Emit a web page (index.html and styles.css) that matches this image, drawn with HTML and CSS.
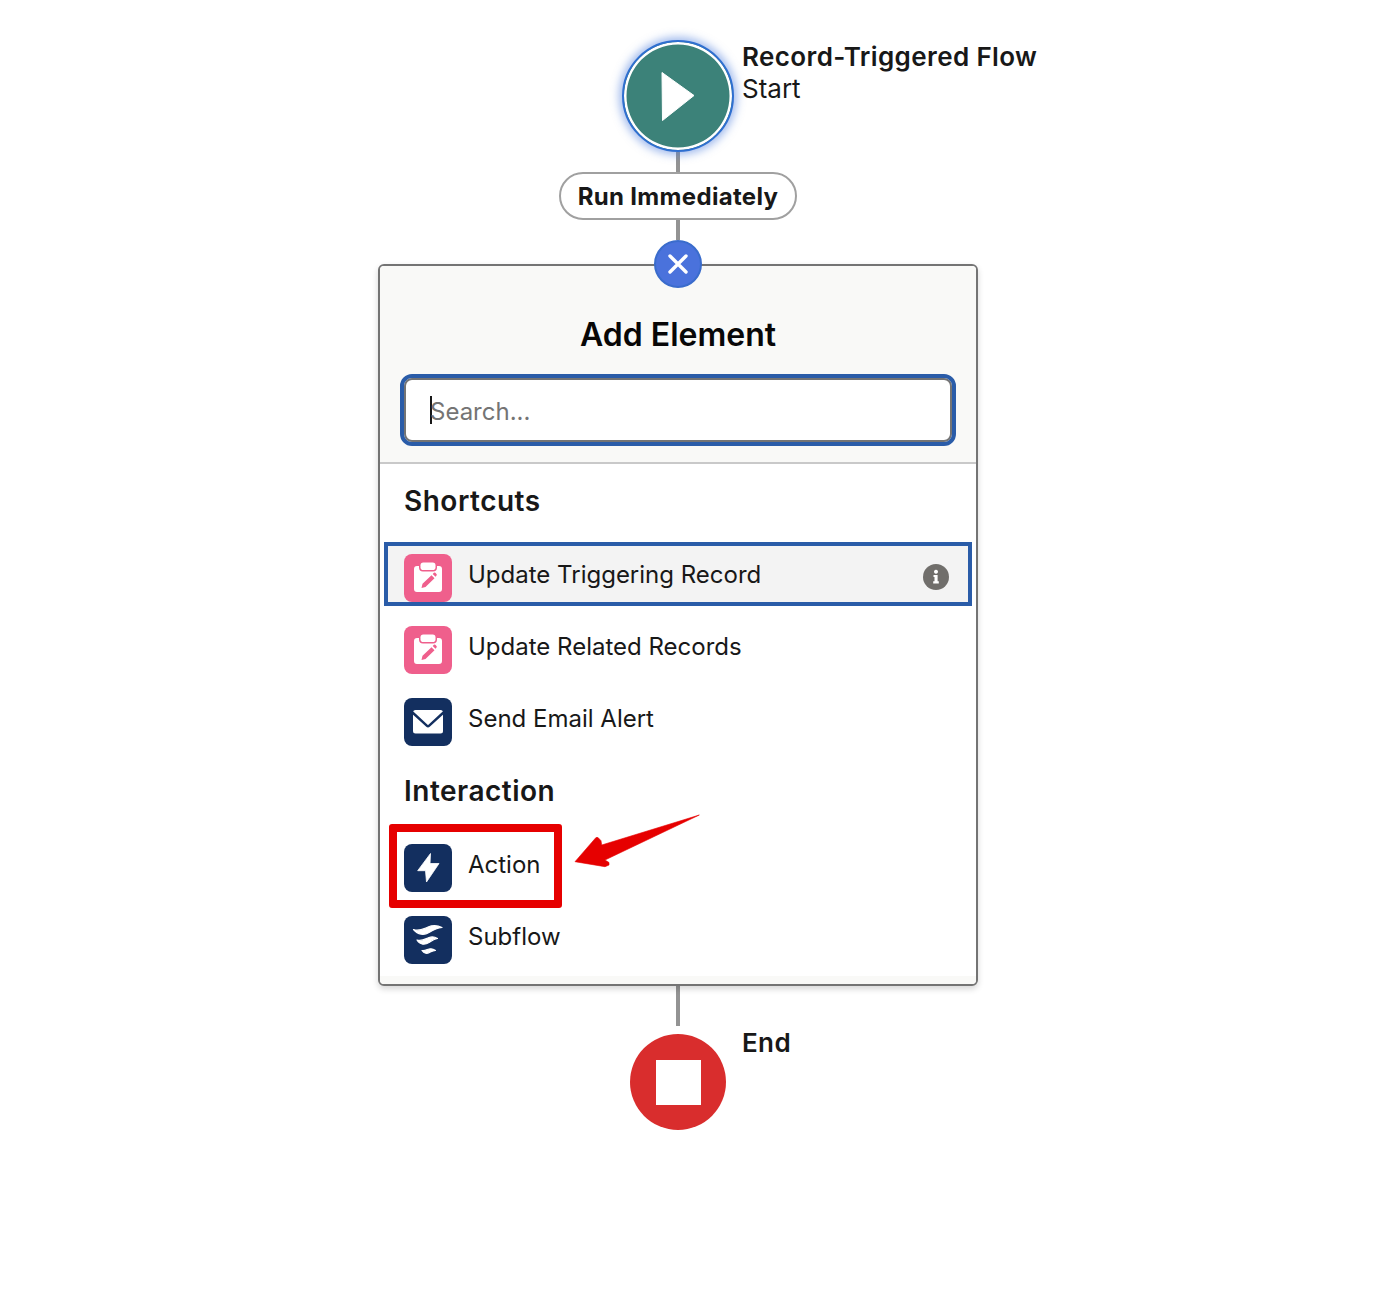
FILE: index.html
```html
<!DOCTYPE html>
<html lang="en">
<head>
<meta charset="utf-8">
<title>Add Element</title>
<link rel="stylesheet" href="styles.css">
</head>
<body>
<main class="flow">
  <div class="node start-node">
    <div class="start-ring">
      <svg class="play" viewBox="0 0 34 50" width="34" height="50"><path d="M1 1.500 33 24.500 1.500 49.500Z" fill="#fff" stroke="#fff" stroke-width="1" stroke-linejoin="round"/></svg>
    </div>
    <div class="node-label"><strong>Record-Triggered Flow</strong><span>Start</span></div>
  </div>
  <div class="line line-20"></div>
  <div class="pill">Run Immediately</div>
  <div class="line line-20"></div>
  <div class="close">
    <svg viewBox="0 0 24 24" width="24" height="24"><path d="M4 4 20 20M20 4 4 20" stroke="#fff" stroke-width="3.400" stroke-linecap="round"/></svg>
  </div>
  <section class="card">
    <header class="card-head">
      <h1>Add Element</h1>
      <div class="search"><span class="caret"></span><span class="placeholder">Search...</span></div>
    </header>
    <div class="card-body">
      <h2>Shortcuts</h2>
      <ul class="list shortcuts">
        <li class="row selected">
          <span class="icon pink"><svg viewBox="0 0 48 48" width="48" height="48"><use href="#clip"/></svg></span>
          <span class="row-text">Update Triggering Record</span>
          <span class="info"><svg viewBox="0 0 26 26" width="26" height="26"><circle cx="13" cy="13" r="13" fill="#706e6b"/><path d="M10.500 11h4.100v6.300h1.200V19.500H10.200V17.300h1.300v-4.200h-1ZM13 5.800a2 2 0 1 1-.01 0Z" fill="#fff"/></svg></span>
        </li>
        <li class="row">
          <span class="icon pink"><svg viewBox="0 0 48 48" width="48" height="48"><use href="#clip"/></svg></span>
          <span class="row-text">Update Related Records</span>
        </li>
        <li class="row">
          <span class="icon navy"><svg viewBox="0 0 48 48" width="48" height="48"><rect x="9" y="12" width="30" height="23.500" rx="2.500" fill="#fff"/><path d="M8.500 14.500 22.800 27.600a1.800 1.800 0 0 0 2.400 0L39.500 14.500" fill="none" stroke="#132f5f" stroke-width="2.400"/></svg></span>
          <span class="row-text">Send Email Alert</span>
        </li>
      </ul>
      <h2 class="second">Interaction</h2>
      <ul class="list">
        <li class="row">
          <span class="icon navy"><svg viewBox="0 0 48 48" width="48" height="48"><path d="M26.500 9.500 13.700 26.700H21.500L22.500 38 35 19.500H26Z" fill="#fff" stroke="#fff" stroke-width=".8" stroke-linejoin="round"/></svg></span>
          <span class="row-text">Action</span>
        </li>
        <li class="row">
          <span class="icon navy"><svg viewBox="0 0 48 48" width="48" height="48"><path d="M9.500 13.500C15 15.500 19 13 24 11 29 9 34 9.500 38 11.500 34 11.800 29 14 25 16.500 20 19.500 14 19 9.500 13.500ZM13 24C18 25.500 21 23 25 21.500 28 20.500 31 21 33.500 22.500 30 22.800 28 24.500 25 26.500 21 29 16 29 13 24ZM18 34.500C21 35 23 33.500 25 33 27 32.500 29.500 33 31.500 34.500 29 34.500 27.500 35.500 25.500 36.500 23 38 20 37.500 18 34.500Z" fill="#fff" stroke="#fff" stroke-width="1.200" stroke-linejoin="round"/></svg></span>
          <span class="row-text">Subflow</span>
        </li>
      </ul>
    </div>
    <div class="card-foot"></div>
    <div class="callout"></div>
    <svg class="arrow" viewBox="0 0 130 60" width="130" height="60"><path d="M127.300 3 29.700 33 29 28.700 26 25.500 24 25.500 3 49.700 33 54.700 37 53 37 50.500 33 48Z" fill="#e60000" stroke="#e60000" stroke-width=".6" stroke-linejoin="round"/></svg>
  </section>
  <div class="line line-40"></div>
  <div class="node end-node">
    <div class="end-circle"><span class="end-square"></span></div>
    <div class="node-label end-label"><strong>End</strong></div>
  </div>
</main>
<svg class="defs" width="0" height="0" aria-hidden="true"><defs>
  <g id="clip">
    <path d="M13 12h2v1.500a4 4 0 0 0 4 4H29a4 4 0 0 0 4-4V12h2a3 3 0 0 1 3 3V35a3 3 0 0 1-3 3H13a3 3 0 0 1-3-3V15a3 3 0 0 1 3-3Z" fill="#fff"/>
    <rect x="16.500" y="8.500" width="15" height="7.500" rx="2.800" fill="#fff"/>
    <path d="M17.500 34 18.500 29.800 27.500 21.200 30.500 24.200 21.500 33Z M28.700 20 29.900 18.800a1 1 0 0 1 1.400 0L32.500 20a1 1 0 0 1 0 1.400L31.500 22.800Z" fill="#ef5f8c"/>
  </g>
</defs></svg>
</body>
</html>
```

FILE: styles.css
```css
* { box-sizing: border-box; }
html, body { margin: 0; padding: 0; background: #fff; }
body { font-family: Inter, "Liberation Sans", sans-serif; color: #181818; height: 1304px; overflow: hidden; }
.flow { width: 1356px; padding-top: 40px; display: flex; flex-direction: column; align-items: center; }
.defs { position: absolute; }

.node { position: relative; display: flex; justify-content: center; }
.start-ring {
  width: 112px; height: 112px; border-radius: 50%;
  background: #3c8279; border: 2.5px solid #2f6fd0;
  box-shadow: inset 0 0 0 2.5px #fff, 0 0 9px 3px rgba(70, 120, 220, .5);
  display: flex; align-items: center; justify-content: center;
}
.node-label { position: absolute; left: calc(50% + 64px); top: 0; white-space: nowrap; display: flex; flex-direction: column; font-size: 26px; line-height: 32px; }
.node-label strong { font-weight: 600; letter-spacing: .38px; }
.start-node .node-label { top: 1px; }

.line { width: 4px; background: #939393; flex: none; }
.line-20 { height: 20px; }
.line-40 { height: 40px; }

.pill {
  width: 238px; height: 48px; border: 2px solid #a0a0a0; border-radius: 24px;
  display: flex; align-items: center; justify-content: center;
  font-size: 24px; font-weight: 700; letter-spacing: .33px; padding-top: 1px;
}
.close {
  width: 48px; height: 48px; border-radius: 50%; background: #4a72dc; border: 2px solid #3a6ccc;
  display: flex; align-items: center; justify-content: center;
  position: relative; z-index: 2; margin-bottom: -24px; flex: none;
}

.card {
  position: relative; width: 600px; height: 722px; border: 2px solid #747474; border-radius: 6px;
  background: #fff; box-shadow: 0 3px 6px rgba(0, 0, 0, .16);
  display: flex; flex-direction: column;
}
.card-head { background: #f9f9f7; height: 198px; border-bottom: 2px solid #c9c9c9; border-radius: 4px 4px 0 0; padding: 46px 20px 0; display: flex; flex-direction: column; align-items: center; flex: none; }
h1 { margin: 0; font-size: 32px; line-height: 46px; font-weight: 600; color: #080707; }
.search {
  margin-top: 16px; width: 556px; height: 72px; flex: none; background: #fff;
  border: 4px solid #2a5ca8; border-radius: 12px; box-shadow: inset 0 0 0 2px #747474;
  display: flex; align-items: center; padding-left: 26px; font-size: 24px; color: #747474;
}
.caret { width: 2px; height: 28px; background: #181818; margin-right: -2px; flex: none; }
.placeholder { margin-top: 2px; }
.card-body { flex: 1; display: flex; flex-direction: column; }
h2 { margin: 0; padding: 19px 0 0 24px; font-size: 28px; line-height: 36px; font-weight: 600; letter-spacing: .5px; }
.second { padding-top: 27px; }
.list { list-style: none; margin: 0; padding: 0; display: flex; flex-direction: column; gap: 24px; }
.shortcuts { margin-top: 35px; }
.second + .list { margin-top: 35px; }
.row { position: relative; display: flex; align-items: center; height: 48px; padding-left: 24px; font-size: 24px; }
.row-text { margin-left: 16px; margin-top: -8px; }
.icon { width: 48px; height: 48px; border-radius: 8px; flex: none; display: block; }
.icon svg { display: block; }
.pink { background: #ef5f8c; }
.navy { background: #132f5f; }
.selected::before { content: ""; position: absolute; left: 4px; right: 4px; top: -12px; bottom: -4px; background: #f3f3f3; border: 4px solid #2a5ca8; }
.selected > * { position: relative; }
.selected > .info { position: absolute; right: 27px; top: 10px; width: 26px; height: 26px; }
.info svg { display: block; }
.card-foot { height: 8px; background: #f9f9f7; border-radius: 0 0 4px 4px; flex: none; }

.callout { position: absolute; left: 9px; top: 558px; width: 173px; height: 84px; border: 8px solid #e60000; border-radius: 3px; }
.arrow { position: absolute; left: 192px; top: 546px; }

.end-node { margin-top: 8px; }
.end-circle { width: 96px; height: 96px; border-radius: 50%; background: #d92d2d; display: flex; align-items: center; justify-content: center; }
.end-square { width: 45px; height: 45px; background: #fff; display: block; }
.end-label { left: calc(50% + 64px); top: -7px; }
```
